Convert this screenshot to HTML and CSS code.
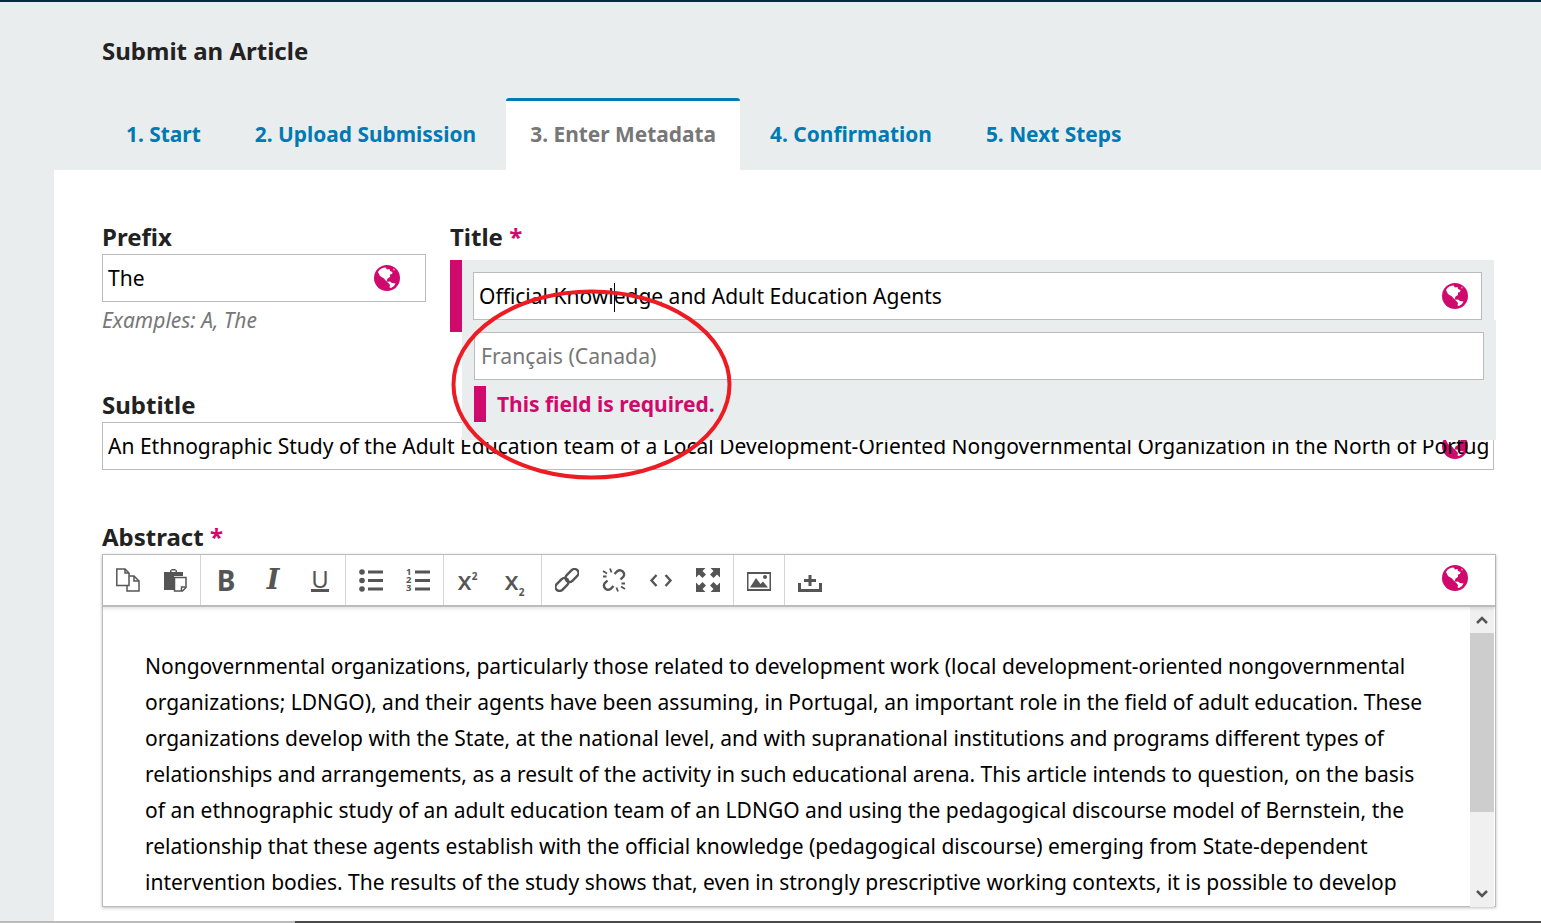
FILE: index.html
```html
<!DOCTYPE html>
<html>
<head>
    <meta charset="UTF-8">
    <title>Submit an Article</title>
    <link rel="stylesheet" href="styles.css">
</head>
<body>
    <svg class="icon-defs" xmlns="http://www.w3.org/2000/svg">
        <symbol id="globe" viewBox="0 0 26 26">
            <circle cx="13" cy="13" r="13" fill="#d00a6c"/>
            <path fill="#fff" d="M4 7C6 3.5 9 2.5 11.5 2.5L13 4.5L15.5 4L16 6L18.5 7L18 9L16 9.5L16 12L13.5 13.5L12.5 16.5L10 13.5L6 11Z"/>
            <path fill="#fff" d="M13.5 17L16 16.5L18 18L21.5 18.5L20 21L17 23L15.5 22.5L16 20Z"/>
            <path fill="#fff" d="M19.5 3.5L21 5L19.5 5.5ZM13 16.5L14.5 16.5L14 17.5Z"/>
        </symbol>
    </svg>

    <div class="page">
        <div class="top-stripe"></div>
        <h1>Submit an Article</h1>
        <div class="tabs">
            <a class="tab">1. Start</a>
            <a class="tab">2. Upload Submission</a>
            <a class="tab active">3. Enter Metadata</a>
            <a class="tab">4. Confirmation</a>
            <a class="tab">5. Next Steps</a>
        </div>

        <div class="panel">
            <div class="row">
                <div class="prefix-col">
                    <div class="label">Prefix</div>
                    <div class="field">The<svg class="globe"><use href="#globe"/></svg></div>
                    <div class="help">Examples: A, The</div>
                </div>
                <div class="title-col">
                    <div class="label title-label">Title <span class="req">*</span></div>
                    <div class="title-block">
                        <div class="field">Official Knowl<span class="caret"></span>edge and Adult Education Agents<svg class="globe"><use href="#globe"/></svg></div>
                        <div class="locale-pop">
                            <div class="field placeholder">Français (Canada)</div>
                            <div class="error"><span class="error-bar"></span>This field is required.</div>
                        </div>
                    </div>
                </div>
            </div>

            <div class="section">
                <div class="label">Subtitle</div>
                <div class="field subtitle-field"><svg class="globe"><use href="#globe"/></svg><span class="subtitle-text">An Ethnographic Study of the Adult Education team of a Local Development-Oriented Nongovernmental Organization in the North of Portugal</span></div>
            </div>

            <div class="label">Abstract <span class="req">*</span></div>
            <div class="editor">
                <div class="toolbar">
                    <div class="tool-group">
                        <span class="tool"><svg viewBox="0 0 24 24" class="ico line"><path d="M.8 1H9l4 4v12.5H.8Z"/><path d="M9 1v4h4"/><path d="M13 8h5l5 5v10H11v-5"/><path d="M18 8v5h5"/></svg></span>
                        <span class="tool"><svg viewBox="0 0 24 24" class="ico"><path d="M1 4h6V2.500l2-1.500h3l2 1.500V4h6v4H11v14H1Z"/><path d="M8.500 2.500h4v1.500h-4Z" fill="#fff"/><path d="M11.500 9.500h11.500v10l-3.500 3.500h-8Z" fill="#fff" stroke="#555" stroke-width="1.500"/><path d="M18.500 23v-4h4" fill="none" stroke="#555" stroke-width="1.500"/></svg></span>
                    </div>
                    <div class="tool-group">
                        <span class="tool"><span class="glyph bold">B</span></span>
                        <span class="tool"><span class="glyph italic">I</span></span>
                        <span class="tool"><span class="glyph under">U</span></span>
                    </div>
                    <div class="tool-group">
                        <span class="tool"><svg viewBox="0 0 24 24" class="ico"><circle cx="3" cy="4" r="2.800"/><circle cx="3" cy="12.500" r="2.800"/><circle cx="3" cy="21" r="2.800"/><path d="M9 2.500h15v3H9ZM9 11h15v3H9ZM9 19.500h15v3H9Z"/></svg></span>
                        <span class="tool"><span class="nums">1<br>2<br>3</span><svg viewBox="0 0 15 24" class="bars"><path d="M0 2.500h15v3H0ZM0 11h15v3H0ZM0 19.500h15v3H0Z"/></svg></span>
                    </div>
                    <div class="tool-group">
                        <span class="tool"><span class="glyph script">x<sup>2</sup></span></span>
                        <span class="tool"><span class="glyph script">x<sub>2</sub></span></span>
                    </div>
                    <div class="tool-group">
                        <span class="tool"><svg viewBox="0 0 24 24" class="ico line thick"><rect x="9.500" y="3.500" width="15" height="8" rx="4" transform="rotate(-45 17 7.500)"/><rect x="-.500" y="12.500" width="15" height="8" rx="4" transform="rotate(-45 7 16.500)"/></svg></span>
                        <span class="tool"><svg viewBox="0 0 24 24" class="ico line thick"><path d="M12.500 6L15.500 3a4.200 4.200 0 0 1 6 5.500L18.500 11.500"/><path d="M11.500 18L8.500 21a4.200 4.200 0 0 1-6-5.500L5.500 12.500"/><path d="M1 3l4 2.500M8 .500l1.500 4M23 21l-4-2.500M16 23.500L14.500 19.500M1 8.500h3.500M23 15.500h-3.500" stroke-width="1.800"/></svg></span>
                        <span class="tool"><svg viewBox="0 0 24 24" class="ico line thick"><path d="M7.500 7L2.500 12.500L7.500 18M16.500 7L21.500 12.500L16.500 18"/></svg></span>
                        <span class="tool"><svg viewBox="0 0 24 24" class="ico"><path d="M0 0h9.500L6.500 3 10 6.500 6.500 10 3 6.500 0 9.500ZM24 0v9.500L21 6.500 17.500 10 14 6.500 17.500 3 14.500 0ZM0 24v-9.500L3 17.500 6.500 14 10 17.500 6.500 21 9.500 24ZM24 24h-9.500L17.500 21 14 17.500 17.500 14 21 17.500 24 14.500Z"/></svg></span>
                    </div>
                    <div class="tool-group">
                        <span class="tool"><svg viewBox="0 0 24 24" class="ico"><path fill-rule="evenodd" d="M0 4h24v19H0ZM1.500 6v15h21V6Z"/><path d="M3 19.500L9 10l4.500 6 2.500-2.500 5 6Z"/><circle cx="18" cy="9" r="2"/></svg></span>
                    </div>
                    <div class="tool-group">
                        <span class="tool"><svg viewBox="0 0 24 24" class="ico"><path d="M0 15h3v6h18v-6h3v9H0Z"/><path d="M10.500 7h3v4h4.500v3h-4.500v4h-3v-4H6v-3h4.500Z"/></svg></span>
                    </div>
                    <svg class="globe"><use href="#globe"/></svg>
                </div>
                <div class="editor-body">
                    <div class="editor-text">Nongovernmental organizations, particularly those related to development work (local development-oriented nongovernmental organizations; LDNGO), and their agents have been assuming, in Portugal, an important role in the field of adult education. These organizations develop with the State, at the national level, and with supranational institutions and programs different types of relationships and arrangements, as a result of the activity in such educational arena. This article intends to question, on the basis of an ethnographic study of an adult education team of an LDNGO and using the pedagogical discourse model of Bernstein, the relationship that these agents establish with the official knowledge (pedagogical discourse) emerging from State-dependent intervention bodies. The results of the study shows that, even in strongly prescriptive working contexts, it is possible to develop</div>
                    <div class="scrollbar">
                        <div class="scroll-btn"><svg viewBox="0 0 12 8"><path d="M1 7L6 2L11 7" /></svg></div>
                        <div class="scroll-thumb"></div>
                        <div class="scroll-btn down"><svg viewBox="0 0 12 8"><path d="M1 1L6 6L11 1" /></svg></div>
                    </div>
                </div>
            </div>
        </div>

        <div class="bottom-bar"><div class="bottom-light"></div><div class="bottom-dark"></div></div>

        <svg class="circle-mark" viewBox="0 0 284 194"><ellipse cx="141.500" cy="96.500" rx="138" ry="93" /></svg>
    </div>
</body>
</html>
```

FILE: styles.css
```css
html, body {
  margin: 0;
  height: 100%;
  overflow: hidden;
}

body {
  background-color: #eaedee;
  font-family: "Noto Sans", sans-serif;
  color: #000;
}

.icon-defs {
  display: none;
}

.page {
  position: relative;
  display: flex;
  flex-direction: column;
  height: 923px;
}

.top-stripe {
  height: 2px;
  background-color: #002c40;
}

h1 {
  margin: 34px 0 32px 102px;
  font-size: 24px;
  line-height: 30px;
  font-weight: 700;
  color: #222;
}

.tabs {
  display: flex;
  gap: 6px;
  margin-left: 102px;
  height: 72px;
}

.tab {
  padding: 0 24px;
  border-top: 3px solid transparent;
  border-radius: 3px 3px 0 0;
  font-size: 20.9px;
  font-weight: 700;
  line-height: 67px;
  color: #007ab2;
}

.tab.active {
  background-color: #fff;
  border-top-color: #007ab2;
  color: #777;
}

.panel {
  flex: 1;
  margin-left: 54px;
  padding: 55px 47px 0 48px;
  background-color: #fff;
}

.row {
  display: flex;
  gap: 24px;
  margin-bottom: 55px;
}

.prefix-col {
  width: 324px;
  flex-shrink: 0;
}

.title-col {
  flex: 1;
}

.section {
  margin-bottom: 55px;
}

.label {
  height: 29px;
  font-size: 24px;
  font-weight: 700;
  line-height: 23px;
  color: #222;
}

.title-label {
  height: 35px;
}

.req {
  color: #d00a6c;
}

.field {
  position: relative;
  box-sizing: border-box;
  height: 48px;
  padding: 0 5px;
  border: 1px solid #bbb;
  background-color: #fff;
  font-size: 21px;
  line-height: 46px;
  white-space: nowrap;
}

.globe {
  position: absolute;
  right: 25px;
  top: 10px;
  width: 26px;
  height: 26px;
}

.help {
  height: 36px;
  font-size: 21px;
  font-style: italic;
  line-height: 36px;
  color: #777;
}

.title-block {
  position: relative;
  height: 72px;
  box-sizing: border-box;
  padding: 12px 12px 12px 11px;
  border-left: 12px solid #d00a6c;
  background-color: #eaedee;
}

.title-block > .field .globe {
  right: 13px;
}

.caret {
  display: inline-block;
  width: 1px;
  height: 29px;
  margin-right: -1px;
  vertical-align: -8px;
  background-color: #000;
}

.locale-pop {
  position: absolute;
  z-index: 2;
  left: 0;
  right: -2px;
  top: 60px;
  height: 120px;
  box-sizing: border-box;
  padding: 12px 12px 0;
  background-color: #eaedee;
}

.placeholder {
  padding-left: 6px;
  font-size: 21.2px;
  color: #777;
}

.error {
  display: flex;
  align-items: center;
  height: 36px;
  margin-top: 6px;
  font-size: 21px;
  font-weight: 700;
  color: #d00a6c;
}

.error-bar {
  width: 12px;
  height: 36px;
  margin-right: 11px;
  background-color: #d00a6c;
}

.subtitle-field {
  font-size: 21.02px;
}

.subtitle-text {
  position: relative;
  display: block;
  overflow: hidden;
}

.editor {
  box-sizing: border-box;
  height: 353px;
  margin-right: -2px;
  border: 1px solid #bbb;
  box-shadow: 0 1px 3px rgba(0, 0, 0, 0.25);
}

.toolbar {
  position: relative;
  display: flex;
  height: 50px;
  border-bottom: 2px solid #bbb;
  box-shadow: 0 2px 3px rgba(0, 0, 0, 0.1);
}

.toolbar .globe {
  right: 27px;
}

.tool-group {
  display: flex;
  padding: 0 1.5px;
  border-right: 1px solid #d5d5d5;
}

.tool-group:nth-child(7) {
  border-right: none;
}

.tool {
  display: flex;
  align-items: center;
  justify-content: center;
  width: 47px;
}

.ico {
  width: 24px;
  height: 24px;
  fill: #555;
}

.ico.line {
  fill: none;
  stroke: #555;
  stroke-width: 1.5;
}

.ico.thick {
  stroke-width: 2.4;
}

.nums {
  width: 9px;
  font-size: 9.5px;
  font-weight: 700;
  line-height: 8px;
  color: #555;
}

.bars {
  width: 15px;
  height: 24px;
  fill: #555;
}

.glyph {
  color: #555;
  line-height: 24px;
}

.bold {
  font-size: 28px;
  font-weight: 700;
}

.italic {
  font-family: "DejaVu Serif", serif;
  font-size: 27px;
  font-weight: 700;
  font-style: italic;
}

.under {
  margin-top: -1px;
  font-size: 24px;
  font-weight: 400;
  line-height: 21px;
  border-bottom: 3px solid #555;
}

.script {
  margin-left: -3px;
  font-size: 26px;
  font-weight: 500;
}

.script sup,
.script sub {
  font-size: 10px;
  font-weight: 700;
  line-height: 0;
}

.editor-body {
  display: flex;
  height: 300px;
}

.editor-text {
  flex: 1;
  padding: 41px 36px 0 42px;
  font-size: 21px;
  line-height: 36px;
  overflow: hidden;
}

.scrollbar {
  display: flex;
  flex-direction: column;
  width: 24px;
  margin-right: 1px;
  background-color: #f0f0f0;
}

.scroll-btn {
  display: flex;
  align-items: center;
  justify-content: center;
  height: 26px;
}

.scroll-btn svg {
  width: 12px;
  height: 8px;
  fill: none;
  stroke: #555;
  stroke-width: 2.5;
}

.scroll-thumb {
  height: 179px;
  margin-bottom: auto;
  background-color: #cdcdcd;
}

.bottom-bar {
  display: flex;
  height: 2px;
}

.bottom-light {
  width: 295px;
  background-color: #bbb;
}

.bottom-dark {
  flex: 1;
  background-color: #4a4a4a;
}

.circle-mark {
  position: absolute;
  z-index: 3;
  left: 450px;
  top: 288px;
  width: 284px;
  height: 194px;
  fill: none;
  stroke: #ed1c24;
  stroke-width: 4;
}
```
